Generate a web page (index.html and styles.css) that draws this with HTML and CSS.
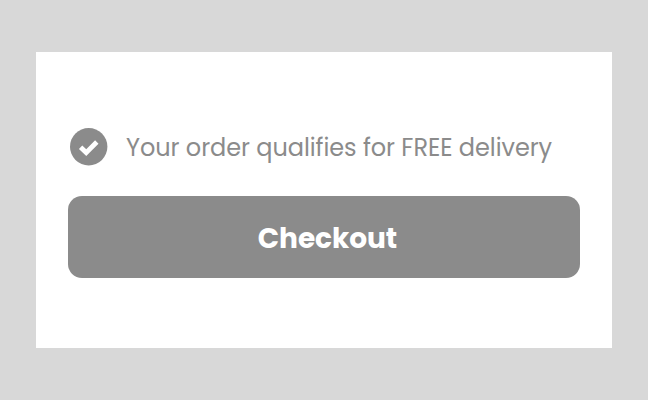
FILE: index.html
```html
<!DOCTYPE html>
<html lang="en">
<head>
<meta charset="utf-8">
<title>Checkout</title>
<link rel="stylesheet" href="styles.css">
</head>
<body>
<main class="card">
  <div class="notice">
    <svg class="check" viewBox="0 0 38 38" aria-hidden="true"><circle cx="18.700" cy="18.700" r="18.700"/><path d="M10.600 19.200l5.600 5.400L26.800 14"/></svg>
    <span class="notice-label">Your order qualifies for FREE delivery</span>
  </div>
  <button class="button" type="button">Checkout</button>
</main>
</body>
</html>
```

FILE: styles.css
```css
* { box-sizing: border-box; }
body {
  margin: 0;
  height: 400px;
  padding: 52px 36px;
  background: #d8d8d8;
  font-family: Poppins, Inter, "Open Sans", sans-serif;
}
.card {
  height: 296px;
  padding: 76px 32px 0;
  background: #fff;
}
.notice {
  display: flex;
  height: 38px;
  padding-left: 2px;
  gap: 18px;
}
.check { flex: none; width: 38px; height: 38px; fill: #8b8b8b; }
.check path { fill: none; stroke: #fff; stroke-width: 4.8; }
.notice-label {
  color: #8b8b8b;
  font-size: 24px;
  letter-spacing: -0.055px;
  line-height: 39px;
  white-space: nowrap;
}
.button {
  display: block;
  width: 512px;
  height: 82px;
  margin-top: 30px;
  padding: 3px 0 0 7px;
  border: 0;
  border-radius: 14px;
  background: #8b8b8b;
  color: #fff;
  font-family: inherit;
  font-size: 28px;
  font-weight: 700;
  letter-spacing: -0.05px;
  line-height: 40px;
  text-align: center;
}
```
